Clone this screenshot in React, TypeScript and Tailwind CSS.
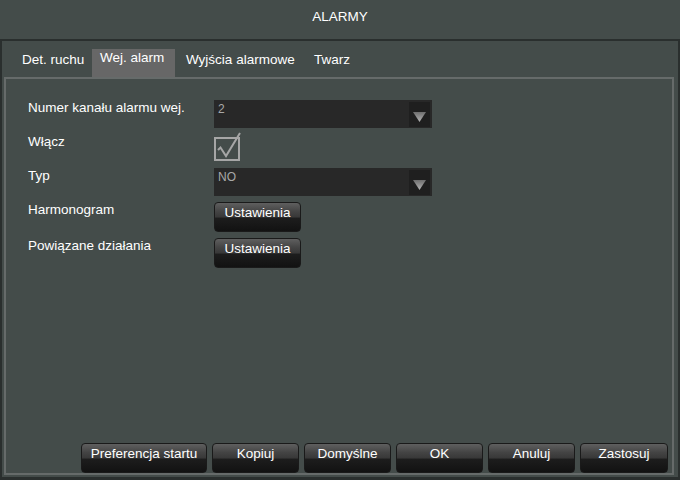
import React from 'react';

const tabs = [
  { label: 'Det. ruchu', w: 'w-[78px]', pl: 'pl-[8px]', active: false },
  { label: 'Wej. alarm', w: 'w-[83px]', pl: 'pl-[8px]', active: true },
  { label: 'Wyjścia alarmowe', w: 'w-[131px]', pl: 'pl-[11px]', active: false },
  { label: 'Twarz', w: 'w-[60px]', pl: 'pl-[8px]', active: false },
];

const Arrow: React.FC<{ id: string }> = ({ id }) => (
  <svg width="13" height="10" viewBox="0 0 13 10">
    <defs>
      <linearGradient id={id} x1="0" y1="0" x2="0" y2="1">
        <stop offset="0" stopColor="#6e6e6e" />
        <stop offset="1" stopColor="#b4b4b4" />
      </linearGradient>
    </defs>
    <polygon points="0,0 13,0 6.5,10" fill={`url(#${id})`} />
  </svg>
);

const Select: React.FC<{ value: string; id: string }> = ({ value, id }) => (
  <div className="w-[218px] h-[28px] bg-[#282828] flex justify-between">
    <span className="pl-[4px] pt-[2px] text-[12px] leading-[15px] text-[#a8a8a8]">{value}</span>
    <div className="w-[21px] h-[25px] mt-[2px] mr-[2px] bg-[#1f1f1f] flex items-end justify-center pb-[5px]">
      <Arrow id={id} />
    </div>
  </div>
);

const Btn: React.FC<{ label: string; w: string }> = ({ label, w }) => (
  <div
    className={`${w} h-[30px] rounded-[4px] border border-[#1a1a1a] bg-[linear-gradient(180deg,#5f5f5f_0%,#444_30%,#383838_50%,#1d1d1d_54%,#121212_100%)] text-center text-[13.5px] leading-[15px] pt-[2px] text-white`}
  >
    {label}
  </div>
);

export default function App() {
  return (
    <div className="w-[680px] h-[480px] bg-[#444c4a] flex flex-col text-white font-['Liberation_Sans',Arial,sans-serif] overflow-hidden">
      <div className="h-[39px] flex items-center justify-center text-[13.5px] pb-[4px]">ALARMY</div>
      <div className="flex-1 flex flex-col border-t-2 border-l-2 border-r-2 border-b-[3px] border-[#2a2f2e] pt-[8px]">
        <div className="flex pl-[12px] h-[28px] text-[13.5px] leading-[15px]">
          {tabs.map(t => (
            <div
              key={t.label}
              className={`${t.w} ${t.pl} ${t.active ? 'bg-[#676767] pt-[1px]' : 'pt-[3px]'}`}
            >
              {t.label}
            </div>
          ))}
        </div>
        <div className="flex-1 ml-[2px] mr-[4px] mb-[2px] border-2 border-[#666b6a] flex flex-col">
          <div className="pt-[21px] pl-[22px] text-[13.5px] leading-[15px]">
            <div className="flex h-[34px]">
              <div className="w-[186px]">Numer kanału alarmu wej.</div>
              <Select value="2" id="a1" />
            </div>
            <div className="flex h-[34px]">
              <div className="w-[186px]">Włącz</div>
              <div className="relative w-[26px] h-[24px] mt-[3px] border-2 border-[#a6a6a6]">
                <svg className="absolute left-[-2px] top-[-7px]" width="30" height="30" viewBox="0 0 30 30">
                  <polyline
                    points="4,18 6.5,15.5 12,24 26,1"
                    fill="none"
                    stroke="#a6a6a6"
                    strokeWidth="2"
                  />
                </svg>
              </div>
            </div>
            <div className="flex h-[34px]">
              <div className="w-[186px]">Typ</div>
              <Select value="NO" id="a2" />
            </div>
            <div className="flex h-[36px]">
              <div className="w-[186px]">Harmonogram</div>
              <Btn label="Ustawienia" w="w-[87px]" />
            </div>
            <div className="flex h-[36px]">
              <div className="w-[186px]">Powiązane działania</div>
              <Btn label="Ustawienia" w="w-[87px]" />
            </div>
          </div>
          <div className="mt-auto flex justify-end gap-[5px] pr-[4px]">
            <Btn label="Preferencja startu" w="w-[126px]" />
            <Btn label="Kopiuj" w="w-[87px]" />
            <Btn label="Domyślne" w="w-[87px]" />
            <Btn label="OK" w="w-[87px]" />
            <Btn label="Anuluj" w="w-[87px]" />
            <Btn label="Zastosuj" w="w-[88px]" />
          </div>
        </div>
      </div>
    </div>
  );
}
